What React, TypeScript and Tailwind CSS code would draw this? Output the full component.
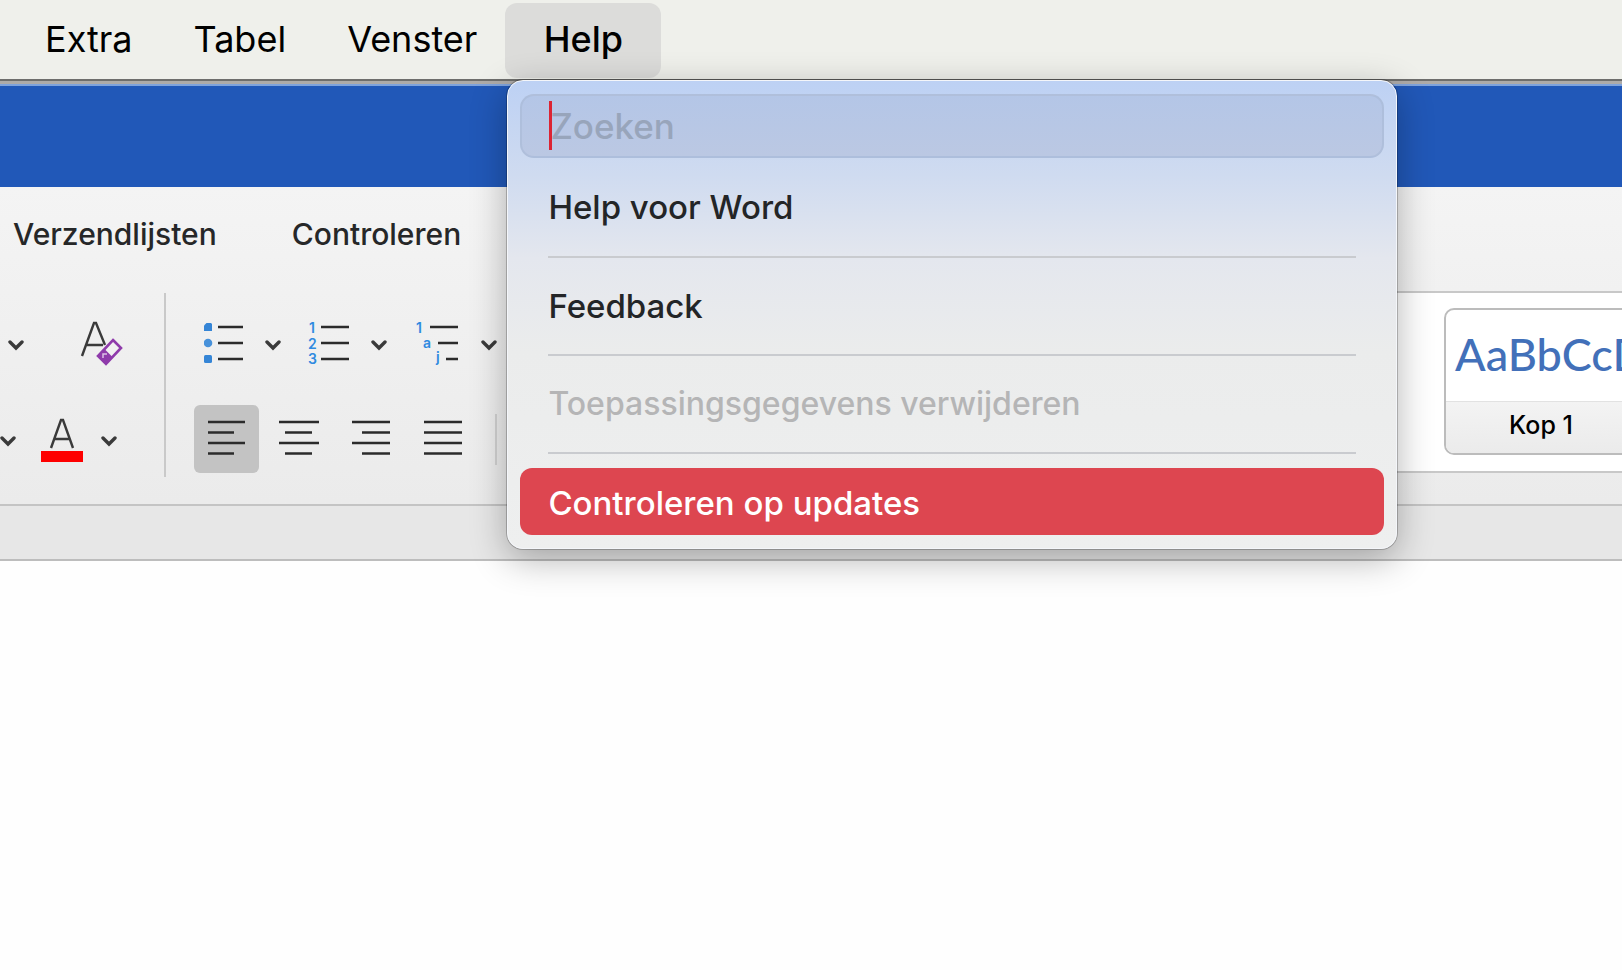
import { ReactNode } from 'react';

const MENUS = ['Extra', 'Tabel', 'Venster'];
const TABS = ['Verzendlijsten', 'Controleren'];

const itemCls = 'block w-full px-[28px] text-left text-[33px] font-[450]';

export default function App() {
  return (
    <div className="min-h-screen overflow-hidden bg-[#fefefe] font-['Inter','Liberation_Sans',sans-serif] text-[#262728]">
      {/* Menu bar */}
      <nav className="flex h-[79px] items-start bg-[#eff0eb] pl-[27px] pt-[3px] text-[36px] leading-[44px] text-black">
        <div className="flex gap-[25px]">
          {MENUS.map((m) => (
            <button key={m} type="button" className="h-[75px] px-[18px] pb-1">
              {m}
            </button>
          ))}
        </div>
        <div className="relative ml-[10px]">
          <button type="button" aria-expanded="true" className="h-[75px] w-[156px] rounded-xl bg-[#dcdcda] pb-1 font-[450]">
            Help
          </button>
          <HelpMenu />
        </div>
      </nav>

      {/* Window title bar */}
      <div className="h-[108px] border-t-2 border-[#6e6e6c] bg-[#2158b8]">
        <div className="h-[5px] border-b-2 border-[#7fa3dc] bg-[#aeaba8]" />
      </div>

      <Ribbon />

      {/* Ruler strip */}
      <div className="h-[55px] border-b-2 border-[#bdbdbd] bg-[#e7e7e7]" />
    </div>
  );
}

function HelpMenu() {
  return (
    <div className="absolute left-0.5 top-[77px] z-10 w-[890px] rounded-2xl border border-[#f4f6fa] bg-[linear-gradient(#bdd1f4,#cfdbf0_20%,#e4e7ee_38%,#ebecec_58%,#eeefef)] px-[12px] pb-[13px] pt-[13px] leading-[42px] text-[#232527] shadow-[0_0_0_1px_rgba(0,0,0,0.22),0_10px_36px_rgba(0,0,0,0.3)]">
      <div className="relative">
        <input
          type="text"
          aria-label="Zoeken"
          placeholder="Zoeken"
          className="block h-[64px] w-full rounded-[14px] border-2 border-[#a9b9d6]/60 bg-linear-to-b from-[#b4c6e7] to-[#bbc8e3] px-[28px] text-[35px] font-[450] placeholder:text-[#98a5bb] focus:outline-none"
        />
        <span className="absolute left-[29px] top-[7px] h-[49px] w-[3px] bg-[#dc2433]" />
      </div>
      <button type="button" className={itemCls + ' h-[98px]'}>Help voor Word</button>
      <Separator />
      <button type="button" className={itemCls + ' h-[96px]'}>Feedback</button>
      <Separator />
      <button type="button" disabled className="block h-[96px] w-full px-[28px] text-left text-[32px] font-[450] text-[#b5b5b6]">
        Toepassingsgegevens verwijderen
      </button>
      <Separator />
      <button type="button" className={itemCls + ' mt-[14px] h-[67px] rounded-xl bg-[#dd4650] pt-[2px] text-white'}>
        Controleren op updates
      </button>
    </div>
  );
}

function Separator() {
  return <hr className="mx-[28px] h-[2px] border-0 bg-[#c9cbcf]" />;
}

function Ribbon() {
  return (
    <div className="h-[319px] border-b-2 border-[#c4c4c4] bg-linear-to-b from-[#f4f4f4] to-[#ebebeb]">
      <div className="flex h-[104px] items-start gap-[75px] pl-[13px] pt-[29px] text-[30px] font-[450] leading-[36px]">
        {TABS.map((t) => (
          <button key={t} type="button">{t}</button>
        ))}
      </div>

      <div className="flex items-start">
        {/* Font group */}
        <div className="w-[164px] shrink-0">
          <div className="flex h-[104px] items-center gap-[56px] pl-2">
            <Chevron label="Tekstopties" />
            <Tool label="Opmaak wissen">
              <svg width="44" height="46" viewBox="0 0 44 46" fill="none">
                <path d="M2 36 14 3h2l9 22M6 25h17" stroke="#3a3a3a" strokeWidth="2.4" />
                <path d="M33 20 41 28 26 44 18 36Z" fill="#f1f1f1" stroke="#8f3bab" strokeWidth="2.6" />
                <path d="m24.500 29 8 8-6.500 7-8-8Z" fill="#8f3bab" />
                <path d="M23 38v-4h4" stroke="#dcc0e6" strokeWidth="1.500" />
              </svg>
            </Tool>
          </div>
          <div className="flex h-[88px] items-center">
            <Chevron label="Markeringskleur" />
            <div className="ml-[25px] mr-[17px]">
              <Tool label="Tekstkleur">
                <svg width="43" height="48" viewBox="0 0 43 48" fill="none">
                  <path d="M10 33 20 5h2l10 28M14 24h14" stroke="#3a3a3a" strokeWidth="2.4" />
                  <path d="M0 36h42v11H0z" fill="#fe0000" />
                </svg>
              </Tool>
            </div>
            <Chevron label="Tekstkleur kiezen" />
          </div>
        </div>

        <div className="mt-0.5 h-[184px] w-[2px] shrink-0 bg-[#c9c9c9]" />

        {/* Paragraph group */}
        <div className="shrink-0 pr-10">
          <div className="flex h-[104px] items-center pl-[38px]">
            <Tool label="Opsommingstekens">
              <svg width="40" height="44" viewBox="0 0 40 44">
                <path d="M2.500 2H7l1 1v7H0V4.500Z" fill="#3585d6" />
                <circle cx="4" cy="22" r="4.300" fill="#4791da" />
                <rect x="0" y="34" width="8" height="8" rx="1.500" fill="#3585d6" />
                <path d="M14 6h25M14 22h25M14 38h25" stroke="#2b2b2b" strokeWidth="2.400" />
              </svg>
            </Tool>
            <div className="ml-[21px] mr-[28px]"><Chevron label="Opsommingstekens kiezen" /></div>
            <Tool label="Nummering">
              <svg width="40" height="44" viewBox="0 0 40 44" className="overflow-visible">
                <g fill="#2f8ae0" fontSize="14" fontWeight="600">
                  <text x="0" y="12">1</text>
                  <text x="-1" y="28">2</text>
                  <text x="-1" y="43">3</text>
                </g>
                <path d="M12 6h28M12 22h28M12 38h28" stroke="#2b2b2b" strokeWidth="2.400" />
              </svg>
            </Tool>
            <div className="ml-[22px] mr-[29px]"><Chevron label="Nummering kiezen" /></div>
            <Tool label="Lijst met meerdere niveaus">
              <svg width="43" height="44" viewBox="0 0 43 44" className="overflow-visible">
                <g fill="#2f8ae0" fontSize="14" fontWeight="600">
                  <text x="0" y="12">1</text>
                  <text x="7" y="27">a</text>
                  <text x="20" y="41">j</text>
                </g>
                <path d="M14 6h28M22 22h20M30 38h12" stroke="#2b2b2b" strokeWidth="2.400" />
              </svg>
            </Tool>
            <div className="ml-[22px]"><Chevron label="Niveaus kiezen" /></div>
          </div>
          <div className="flex h-[88px] items-center pl-[28px]">
            <button type="button" aria-label="Links uitlijnen" aria-pressed="true" className="flex h-[68px] w-[65px] items-center justify-center rounded-md bg-[#c3c3c3]">
              <Lines d="M1 2h37M1 12.500h26M1 23h37M1 33.500h26" />
            </button>
            <div className="flex items-center gap-[32px] pl-5">
              <Tool label="Centreren"><Lines d="M0 2h40M6 12.500h27M0 23h40M6 33.500h27" /></Tool>
              <Tool label="Rechts uitlijnen"><Lines d="M1 2h38M11 12.500h28M1 23h38M11 33.500h28" /></Tool>
              <Tool label="Uitvullen"><Lines d="M1 2h38M1 12.500h38M1 23h38M1 33.500h38" /></Tool>
              <div className="h-[51px] w-[2px] bg-[#d2d2d2]" />
            </div>
          </div>
        </div>

        {/* Style gallery, runs on past the window edge */}
        <div className="flex h-[182px] min-w-0 flex-1 justify-end overflow-hidden border-y-2 border-[#c8c8c8] bg-white pt-[15px]">
          <button type="button" className="-mr-[16px] flex h-[147px] w-[194px] shrink-0 flex-col overflow-hidden rounded-[10px] border-2 border-[#bcbcbc] bg-white">
            <span className="block h-[91px] w-full whitespace-nowrap pl-[9px] text-left font-['Lato','Open_Sans',sans-serif] text-[45px] font-medium leading-[88px] text-[#4270b9]">
              AaBbCcD
            </span>
            <span className="block w-full flex-1 border-t border-[#e2e2e2] bg-linear-to-b from-[#f3f3f3] to-[#ebebeb] text-center text-[25px] font-medium leading-[46px] text-black">
              Kop 1
            </span>
          </button>
        </div>
      </div>
    </div>
  );
}

function Tool({ label, children }: { label: string; children: ReactNode }) {
  return (
    <button type="button" aria-label={label} className="block shrink-0">
      {children}
    </button>
  );
}

function Chevron({ label }: { label: string }) {
  return (
    <button type="button" aria-label={label} className="block shrink-0">
      <svg width="16" height="16" viewBox="0 0 16 16" fill="none">
        <path d="m2 7 6 6 6-6" stroke="#3a3a3a" strokeWidth="3.400" strokeLinecap="round" />
      </svg>
    </button>
  );
}

function Lines({ d }: { d: string }) {
  return (
    <svg width="40" height="38" viewBox="0 0 40 38">
      <path d={d} stroke="#2b2b2b" strokeWidth="2.400" />
    </svg>
  );
}
